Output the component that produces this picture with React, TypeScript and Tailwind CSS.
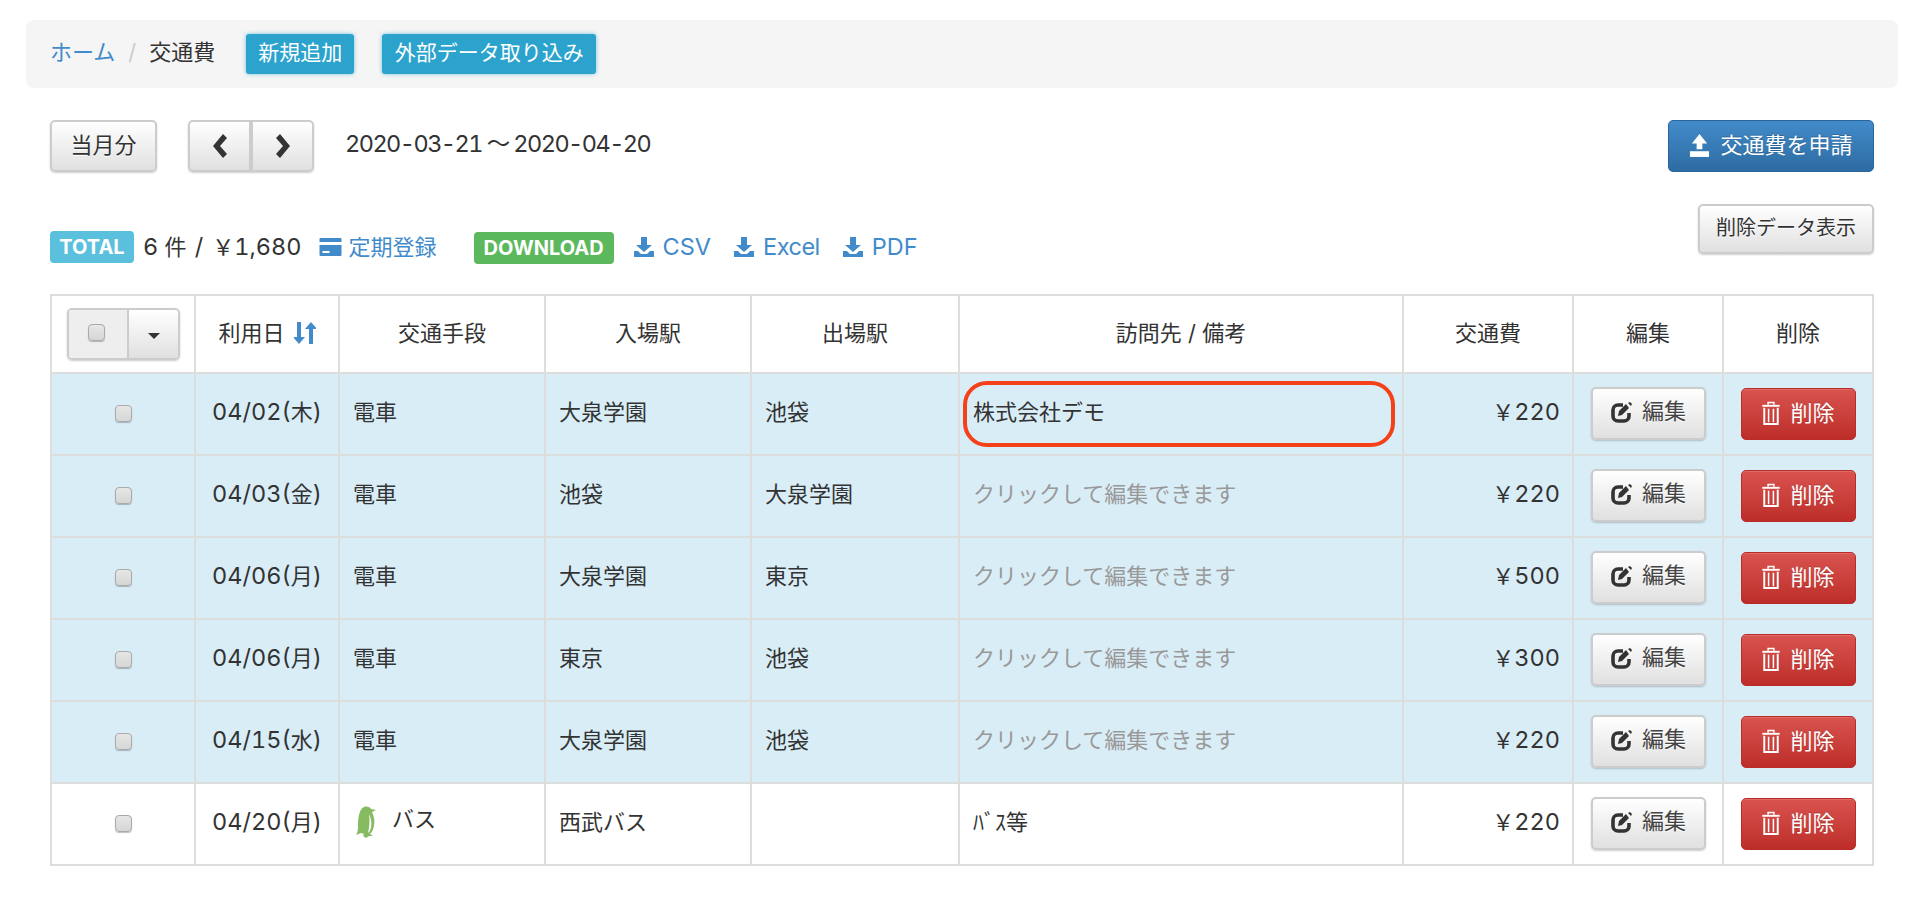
import React from "react";

const rows = [
  { c: ["04/02(", "木"], t: "電車", a: "大泉学園", b: "池袋", n: "株式会社デモ", p: "220", on: true },
  { c: ["04/03(", "金"], t: "電車", a: "池袋", b: "大泉学園", n: "", p: "220", on: true },
  { c: ["04/06(", "月"], t: "電車", a: "大泉学園", b: "東京", n: "", p: "500", on: true },
  { c: ["04/06(", "月"], t: "電車", a: "東京", b: "池袋", n: "", p: "300", on: true },
  { c: ["04/15(", "水"], t: "電車", a: "大泉学園", b: "池袋", n: "", p: "220", on: true },
  { c: ["04/20(", "月"], t: "バス", a: "西武バス", b: "", n: "ﾊﾞｽ等", p: "220", on: false },
];

const gray = "border-2 border-[#ccc] rounded-[5px] bg-gradient-to-b from-white to-[#e0e0e0] shadow-[0_1px_2px_rgba(0,0,0,0.2)] [text-shadow:0_1px_0_#fff] text-[#333]";
const th = "border-2 border-[#ddd] font-normal text-center";
const td = "border-2 border-[#ddd] pl-[13px] pr-[12px] pb-[4px]";

const L = ({ children }: { children: React.ReactNode }) => (
  <span className="text-[23.5px] leading-none tabular-nums">{children}</span>
);

const DownloadIcon = () => (
  <svg viewBox="0 0 22 22" className="w-[22px] h-[22px]" fill="#428bca">
    <path d="M8 1h6v8h5l-8 7-8-7h5z" />
    <path d="M1 15h4l3 3h6l3-3h4v6H1z" />
  </svg>
);

const Check = () => (
  <span className="inline-block w-[17px] h-[17px] rounded-[4px] border border-[#aaa] bg-gradient-to-b from-[#e6e6e6] to-[#d6d6d6] shadow-[0_1px_1px_rgba(0,0,0,0.25)] align-middle" />
);

const Penguin = () => (
  <svg viewBox="0 0 20 33" className="w-[20px] h-[33px]">
    <path fill="#86bb62" d="M8 1c3-1 6 0 7 2l5 1-4 2c2 4 3 9 2 14-1 4-2 6-4 8l3 2-4 0-3 2-3-2 1-2-3-1-5 2c2-3 2-6 2-10C2 13 3 3 8 1z" />
    <path fill="#fff" d="M13 8c2 4 3 9 2 13-.5 3-1.500 5-3 6 1.500-6 2-13 1-19z" />
  </svg>
);

const EditBtn = () => (
  <button className={`${gray} w-[115px] h-[53px] flex items-center justify-center gap-[9px] text-[#444] mx-auto -mt-[2px] pb-[4px]`}>
    <svg viewBox="0 0 23 23" className="w-[23px] h-[23px] mt-[2px]" fill="none">
      <path d="M13 4H8a5 5 0 0 0-5 5v6a5 5 0 0 0 5 5h6a5 5 0 0 0 5-5v-3" stroke="#333" strokeWidth="3.600" />
      <path d="M8 15l1-5 7-7 3 4-7 7z" fill="#333" />
      <path d="M18 2l2-1 2 2-1 2z" fill="#333" />
    </svg>
    <span>編集</span>
  </button>
);

const DelBtn = () => (
  <button className="w-[115px] h-[52px] rounded-[5px] border border-[#b92c28] bg-gradient-to-b from-[#d9534f] to-[#bd2d29] text-white flex items-center justify-center gap-[9px] mx-auto pb-[2px] [text-shadow:0_-1px_0_rgba(0,0,0,0.2)] shadow-[inset_0_1px_0_rgba(255,255,255,0.15)]">
    <svg viewBox="0 0 20 26" className="w-[20px] h-[25px]" fill="none" stroke="#fff">
      <path d="M1 5h18" strokeWidth="2" />
      <path d="M7 4V1.500h6V4" strokeWidth="1.600" />
      <path d="M3 7v17h14V7" strokeWidth="2" />
      <path d="M7.500 8v14M12.500 8v14" strokeWidth="1.600" />
    </svg>
    <span>削除</span>
  </button>
);

export default function App() {
  return (
    <div className="bg-white w-[1930px] h-[904px] overflow-hidden pl-[26px] pr-[32px] pt-[20px] text-[22px] text-[#333] font-['Inter','Noto_Sans_CJK_JP',sans-serif]">
      <div className="h-[68px] bg-[#f5f5f5] rounded-[8px] px-[24px] flex items-center">
        <a className="text-[#428bca] -mt-[3px]">ホーム</a>
        <span className="text-[#ccc] ml-[13px] mr-[13px] -mt-[3px]">/</span>
        <span className="-mt-[3px]">交通費</span>
        <button className="ml-[31px] h-[40px] w-[108px] rounded-[3px] bg-[#2ba3cd] text-white text-[21px] shadow-[0_0_4px_rgba(43,163,205,0.6)] pb-[2px]">新規追加</button>
        <button className="ml-[28px] h-[40px] w-[214px] rounded-[3px] bg-[#2ba3cd] text-white text-[21px] shadow-[0_0_4px_rgba(43,163,205,0.6)] pb-[2px]">外部データ取り込み</button>
      </div>

      <div className="mt-[32px] px-[24px] flex items-start h-[52px]">
        <button className={`${gray} w-[107px] h-[52px] text-[22px] pb-[2px]`}>当月分</button>
        <div className={`${gray} ml-[31px] w-[126px] h-[52px] flex overflow-hidden`}>
          <button className="flex-1 flex items-center justify-center border-r-[4px] border-[#ccc]">
            <svg viewBox="0 0 16 24" className="w-[16px] h-[24px]" fill="#333"><path d="M11 0l4 4-7 8 7 8-4 4L1 12z" /></svg>
          </button>
          <button className="flex-1 flex items-center justify-center">
            <svg viewBox="0 0 16 24" className="w-[16px] h-[24px]" fill="#333"><path d="M5 0L1 4l7 8-7 8 4 4 10-12z" /></svg>
          </button>
        </div>
        <span className="ml-[31px] mt-[8px] tracking-[-1.55px]"><L>2020-03-21 〜 2020-04-20</L></span>
        <button className="ml-auto w-[206px] h-[52px] rounded-[5px] border border-[#2b669a] bg-gradient-to-b from-[#428bca] to-[#2d6ca2] text-white flex items-center justify-center gap-[10px] pb-[2px] [text-shadow:0_-1px_0_rgba(0,0,0,0.2)]">
          <svg viewBox="0 0 22 24" className="w-[21px] h-[23px]" fill="#fff">
            <path d="M11 0l8 10h-5v6H8v-6H3z" />
            <path d="M1 18h20v6H1z" />
          </svg>
          <span>交通費を申請</span>
        </button>
      </div>

      <div className="mt-[32px] px-[24px] flex items-start justify-between h-[90px]">
        <div className="flex items-center mt-[26px]">
          <span className="w-[84px] h-[32px] rounded-[4px] bg-[#5bc0de] text-white font-bold text-[20px] flex items-center justify-center -mt-[1px]">TOTAL</span>
          <span className="ml-[9px] whitespace-pre"><L>6</L> 件 <span className="ml-[2px] mr-[3px]"><L>/</L></span> ￥<L>1,680</L></span>
          <svg viewBox="0 0 22 20" className="ml-[17px] w-[23px] h-[20px]" fill="#428bca">
            <path d="M0 2a1 1 0 0 1 1-1h20a1 1 0 0 1 1 1v3H0zM0 8h22v10a1 1 0 0 1-1 1H1a1 1 0 0 1-1-1zm3 6v2h7v-2z" />
          </svg>
          <a className="ml-[7px] text-[#428bca]">定期登録</a>
          <span className="ml-[37px] w-[140px] h-[32px] rounded-[4px] bg-[#5cb85c] text-white font-bold text-[20px] flex items-center justify-center mt-[2px]">DOWNLOAD</span>
          <span className="ml-[19px] flex items-center gap-[8px] text-[#428bca]"><DownloadIcon /><a><L>CSV</L></a></span>
          <span className="ml-[22px] flex items-center gap-[8px] text-[#428bca]"><DownloadIcon /><a className="tracking-[-0.5px]"><L>Excel</L></a></span>
          <span className="ml-[22px] flex items-center gap-[8px] text-[#428bca]"><DownloadIcon /><a><L>PDF</L></a></span>
        </div>
        <button className={`${gray} w-[176px] h-[50px] text-[20px] pb-[2px]`}>削除データ表示</button>
      </div>

      <div className="px-[24px] relative">
        <table className="w-[1822px] table-fixed border-collapse">
          <thead>
            <tr className="h-[78px]">
              <th className={`${th} w-[144px]`}>
                <div className="ml-[15px] w-[113px] h-[52px] flex rounded-[5px] border-2 border-[#ccc] overflow-hidden shadow-[0_1px_2px_rgba(0,0,0,0.2)]">
                  <span className="w-[60px] bg-[#eee] border-r-2 border-[#ccc] flex items-center justify-center pr-[4px] pb-[3px]"><Check /></span>
                  <span className="flex-1 bg-gradient-to-b from-white to-[#e0e0e0] flex items-center justify-center">
                    <span className="w-0 h-0 border-x-[6px] border-x-transparent border-t-[6px] border-t-[#333] mt-[4px]" />
                  </span>
                </div>
              </th>
              <th className={`${th} w-[144px] pb-[2px]`}>
                <span className="inline-flex items-center gap-[9px]">
                  利用日
                  <svg viewBox="0 0 22 24" className="w-[22px] h-[24px]" fill="#428bca">
                    <path d="M5 1h4v15h4l-6 7-6-7h4zM13 8l6-7 3 0v0l-3 0 6 7h-4v15h-4V8z" transform="translate(-2 0)" />
                  </svg>
                </span>
              </th>
              <th className={`${th} w-[206px] pb-[2px]`}>交通手段</th>
              <th className={`${th} w-[206px] pb-[2px]`}>入場駅</th>
              <th className={`${th} w-[208px] pb-[2px]`}>出場駅</th>
              <th className={`${th} w-[444px] pb-[2px]`}>訪問先 / 備考</th>
              <th className={`${th} w-[170px] pb-[2px]`}>交通費</th>
              <th className={`${th} w-[150px] pb-[2px]`}>編集</th>
              <th className={`${th} w-[150px] pb-[2px]`}>削除</th>
            </tr>
          </thead>
          <tbody>
            {rows.map((r, i) => (
              <tr key={i} className={`h-[82px] ${r.on ? "bg-[#d9edf7]" : "bg-white"}`}>
                <td className={`${td} text-center`}><Check /></td>
                <td className="border-2 border-[#ddd] pb-[4px] text-center"><L>{r.c[0]}</L>{r.c[1]}<L>)</L></td>
                <td className={td}>
                  {r.t === "バス" ? (
                    <span className="flex items-center gap-[16px] ml-[3px]"><Penguin /><span className="-mt-[6px]">バス</span></span>
                  ) : r.t}
                </td>
                <td className={td}>{r.a}</td>
                <td className={td}>{r.b}</td>
                <td className={td}>
                  {r.n ? r.n : <span className="text-[#999]">クリックして編集できます</span>}
                </td>
                <td className={`${td} text-right`}>￥<L>{r.p}</L></td>
                <td className="border-2 border-[#ddd]"><EditBtn /></td>
                <td className="border-2 border-[#ddd]"><DelBtn /></td>
              </tr>
            ))}
          </tbody>
        </table>
        <div className="absolute left-[937px] top-[87px] w-[432px] h-[66px] border-[4px] border-[#f4411a] rounded-[24px]" />
      </div>
    </div>
  );
}
